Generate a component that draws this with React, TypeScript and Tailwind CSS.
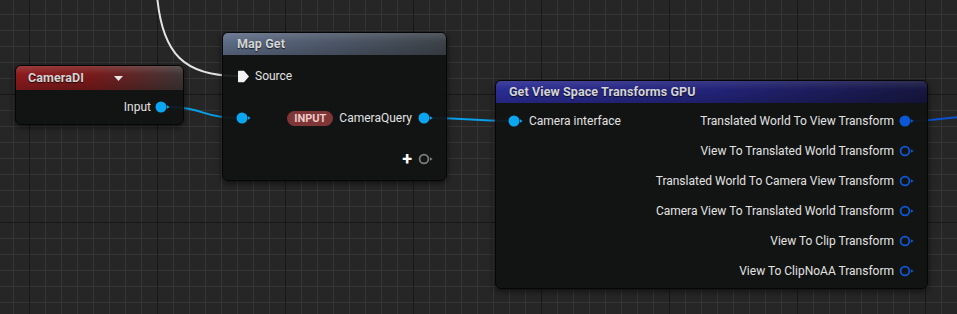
import React from "react";

type PinKind = "filled" | "hollow";

// data pin: circle with the small arrow tip on its right
const DataPin = ({ color, kind = "filled" }: { color: string; kind?: PinKind }) => (
  <svg width="16" height="12" viewBox="0 0 16 12" className="shrink-0">
    {kind === "filled" ? (
      <circle cx="6" cy="6" r="5.5" fill={color} />
    ) : (
      <circle cx="6" cy="6" r="4.4" fill="none" stroke={color} strokeWidth="1.8" />
    )}
    <path d="M12 4.2 L14.6 6 L12 7.8 Z" fill={color} />
  </svg>
);

const ExecPin = () => (
  <svg width="13" height="13" viewBox="0 0 13 13" className="shrink-0">
    <path d="M1 1.5 Q1 0.8 1.7 0.8 L7 0.8 L12 6.5 L7 12.2 L1.7 12.2 Q1 12.2 1 11.5 Z" fill="#f2f2f2" />
  </svg>
);

const titleCls = "font-bold text-[12.5px] text-[#d4d4d4] [text-shadow:0_1px_1px_rgba(0,0,0,0.7)] tracking-[0.1px]";
const labelCls = "text-[12px] text-[#e2e2e2] leading-none";

const CameraDINode = () => (
  <div className="absolute left-[15px] top-[65px] w-[169px] h-[60px] rounded-[6px] border border-[#060606] bg-[rgba(17,19,18,0.93)] shadow-[0_2px_6px_rgba(0,0,0,0.6)] overflow-hidden">
    <div className="h-[24px] flex items-center pl-[12px] gap-[30px] bg-[linear-gradient(to_bottom,rgba(255,255,255,0.14),rgba(255,255,255,0)_35%,rgba(0,0,0,0.2)),linear-gradient(to_right,#8e1b1d,#7a1a1b_45%,#3f3636)]">
      <span className={titleCls}>CameraDI</span>
      <svg width="9" height="5" viewBox="0 0 9 5">
        <path d="M0 0 H9 L4.5 5 Z" fill="#e6e6e6" />
      </svg>
    </div>
    <div className="h-[34px] flex items-center justify-end gap-[4px] pr-[12px]">
      <span className={labelCls}>Input</span>
      <DataPin color="#0aa6f2" />
    </div>
  </div>
);

const MapGetNode = () => (
  <div className="absolute left-[222px] top-[32px] w-[225px] h-[149px] rounded-[6px] border border-[#060606] bg-[rgba(17,19,18,0.93)] shadow-[0_2px_6px_rgba(0,0,0,0.6)] overflow-hidden">
    <div className="h-[22px] flex items-center pl-[14px] bg-[linear-gradient(to_bottom,rgba(255,255,255,0.12),rgba(255,255,255,0)_40%,rgba(0,0,0,0.15)),linear-gradient(to_right,#5d6c86,#4d5769_50%,#3c4248)]">
      <span className={titleCls}>Map Get</span>
    </div>
    <div className="flex flex-col">
      <div className="h-[42px] flex items-center pl-[14px] gap-[5px]">
        <ExecPin />
        <span className={labelCls}>Source</span>
      </div>
      <div className="h-[42px] flex items-center pl-[13px] pr-[12px]">
        <DataPin color="#0aa6f2" />
        <div className="ml-auto flex items-center gap-[6px]">
          <span className="h-[15px] px-[7px] rounded-full bg-[#7e3636] text-[11px] font-bold text-[#eccaca] leading-[15px]">INPUT</span>
          <span className={labelCls}>CameraQuery</span>
          <DataPin color="#0aa6f2" />
        </div>
      </div>
      <div className="h-[40px] flex items-center justify-end pr-[12px] gap-[6px]">
        <span className="text-[18px] font-bold text-white leading-none">+</span>
        <DataPin color="#7c7c7c" kind="hollow" />
      </div>
    </div>
  </div>
);

const outputs = [
  "Translated World To View Transform",
  "View To Translated World Transform",
  "Translated World To Camera View Transform",
  "Camera View To Translated World Transform",
  "View To Clip Transform",
  "View To ClipNoAA Transform",
];

const ViewSpaceNode = () => (
  <div className="absolute left-[495px] top-[80px] w-[433px] h-[209px] rounded-[6px] border border-[#060606] bg-[rgba(17,19,18,0.93)] shadow-[0_2px_6px_rgba(0,0,0,0.6)] overflow-hidden">
    <div className="h-[22px] flex items-center pl-[13px] bg-[linear-gradient(to_bottom,rgba(255,255,255,0.1),rgba(255,255,255,0)_40%,rgba(0,0,0,0.15)),linear-gradient(to_right,#2b2c93,#23237a_50%,#16163f)]">
      <span className={titleCls}>Get View Space Transforms GPU</span>
    </div>
    <div className="flex pt-[3px]">
      <div className="flex flex-col">
        <div className="h-[30px] flex items-center pl-[12px] gap-[5px]">
          <DataPin color="#0aa6f2" />
          <span className={labelCls}>Camera interface</span>
        </div>
      </div>
      <div className="ml-auto flex flex-col items-end pr-[12px]">
        {outputs.map((name, i) => (
          <div key={i} className="h-[30px] flex items-center gap-[5px]">
            <span className={labelCls}>{name}</span>
            <DataPin color="#0a58d6" kind={i === 0 ? "filled" : "hollow"} />
          </div>
        ))}
      </div>
    </div>
  </div>
);

export default function App() {
  return (
    <div
      className="relative w-[957px] h-[314px] overflow-hidden bg-[#262626] font-['Roboto',sans-serif]
        bg-[linear-gradient(to_right,#181818_1px,transparent_1px),linear-gradient(to_bottom,#181818_1px,transparent_1px),linear-gradient(to_right,#353535_1px,transparent_1px),linear-gradient(to_bottom,#353535_1px,transparent_1px)]
        [background-size:128px_128px,128px_128px,16px_16px,16px_16px]
        [background-position:29px_94px,29px_94px,13px_14px,13px_14px]"
    >
      {/* wires sit under the nodes */}
      <svg className="absolute inset-0" width="957" height="314">
        <path d="M157 -5 C162 55, 185 76, 238 76" fill="none" stroke="#e4e4e4" strokeWidth="2" />
        <path d="M168 107 C202 107, 204 118, 236 118" fill="none" stroke="#0a9ee8" strokeWidth="2" />
        <path d="M431 118 C470 118, 472 121, 508 121" fill="none" stroke="#0a9ee8" strokeWidth="2" />
        <path d="M911 121 C935 121, 940 118, 962 117" fill="none" stroke="#0a52d0" strokeWidth="2" />
      </svg>
      <CameraDINode />
      <MapGetNode />
      <ViewSpaceNode />
    </div>
  );
}
